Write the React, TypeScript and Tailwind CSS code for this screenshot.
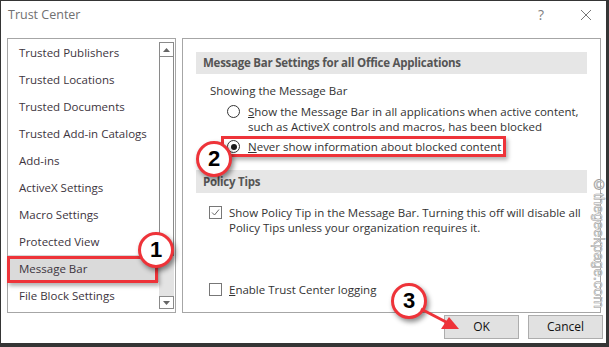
import React from 'react';

const navItems = [
	'Trusted Publishers',
	'Trusted Locations',
	'Trusted Documents',
	'Trusted Add-in Catalogs',
	'Add-ins',
	'ActiveX Settings',
	'Macro Settings',
	'Protected View',
	'Message Bar',
	'File Block Settings',
];

function Callout({ n, className }: { n: string; className: string }) {
	return (
		<div
			className={`absolute w-[36px] h-[36px] rounded-full border-[3px] border-[#ee3339] bg-white flex items-center justify-center shadow-[2px_3px_5px_rgba(0,0,0,0.45)] ${className}`}
		>
			<span className="text-[22px] font-bold text-black leading-none font-['Liberation_Sans',sans-serif]">{n}</span>
		</div>
	);
}

function Radio({ checked }: { checked?: boolean }) {
	return (
		<span className="w-[13px] h-[13px] rounded-full border border-[#333] bg-white flex items-center justify-center shrink-0 mt-[1px]">
			{checked && <span className="w-[6px] h-[6px] rounded-full bg-[#1a1a1a]" />}
		</span>
	);
}

function Checkbox({ checked }: { checked?: boolean }) {
	return (
		<span className="w-[13px] h-[13px] border border-[#777] bg-white flex items-center justify-center shrink-0 mt-[1px]">
			{checked && (
				<svg width="9" height="9" viewBox="0 0 9 9">
					<path d="M1 4.5 L3.5 7 L8 1.5" fill="none" stroke="#666" strokeWidth="1" />
				</svg>
			)}
		</span>
	);
}

export default function App() {
	return (
		<div className="relative w-[609px] h-[347px] overflow-hidden bg-[#353535] font-['Open_Sans',sans-serif] text-[11.5px] text-[#333]">
			<div className="ml-[1px] mt-[1px] w-[605px] h-[342px] bg-white flex flex-col">
				{/* title bar */}
				<div className="h-[37px] flex items-start pt-[5px] pl-[7px] pr-[14px]">
					<span className="text-[12.5px] leading-[18px] text-[#707070]">Trust Center</span>
					<span className="ml-auto mr-[36px] text-[14px] leading-[18px] text-[#808080]">?</span>
					<svg width="12" height="12" viewBox="0 0 12 12" className="mt-[3px]">
						<path d="M1 1 L11 11 M11 1 L1 11" stroke="#777" strokeWidth="1" />
					</svg>
				</div>

				{/* content */}
				<div className="flex gap-[6px] pl-[6px] h-[275px]">
					<div className="w-[169px] h-full border border-[#a6a6a6] flex overflow-hidden">
						<div className="flex-1 flex flex-col">
							{navItems.map((item) => (
								<div
									key={item}
									className={`h-[27px] shrink-0 flex items-center pl-[11px] whitespace-nowrap text-[#3d3540] ${item === 'Message Bar' ? 'bg-[#dadada]' : ''}`}
								>
									{item}
								</div>
							))}
						</div>
						<div className="w-[15px] mr-[1px] mt-[3px] mb-[3px] flex flex-col">
							<div className="h-[15px] border border-[#8a8a8a] flex items-center justify-center">
								<svg width="7" height="4" viewBox="0 0 7 4">
									<path d="M0 4 L3.5 0 L7 4 Z" fill="#666" />
								</svg>
							</div>
							<div className="flex-1 border-x border-b border-[#8a8a8a]" />
							<div className="h-[40px] bg-[#e3e3e3]" />
							<div className="h-[13px] border border-[#8a8a8a] flex items-center justify-center">
								<svg width="7" height="4" viewBox="0 0 7 4">
									<path d="M0 0 L3.5 4 L7 0 Z" fill="#666" />
								</svg>
							</div>
						</div>
					</div>

					<div className="w-[419px] h-full border border-[#a6a6a6] px-[13px] pt-[13px] flex flex-col whitespace-nowrap">
						<div className="h-[22px] bg-[#e6e6e6] flex items-center pl-[7px] font-bold text-[#555] tracking-[-0.25px]">
							Message Bar Settings for all Office Applications
						</div>
						<div className="mt-[9px] pl-[14px] leading-[16px]">Showing the Message Bar</div>
						<div className="mt-[5px] pl-[31px] flex gap-[8px] leading-[15px]">
							<Radio />
							<span>
								<span className="underline">S</span>how the Message Bar in all applications when active content,
								<br />
								such as ActiveX controls and macros, has been blocked
							</span>
						</div>
						<div className="mt-[5px] pl-[31px] flex gap-[8px] leading-[15px]">
							<Radio checked />
							<span>
								<span className="underline">N</span>ever show information about blocked content
							</span>
						</div>
						<div className="mt-[16px] h-[23px] bg-[#e6e6e6] flex items-center pl-[7px] font-bold text-[#555] tracking-[-0.25px]">
							Policy Tips
						</div>
						<div className="mt-[12px] pl-[13px] flex gap-[7px] leading-[15px]">
							<Checkbox checked />
							<span>
								Show Policy Tip in the Message Bar. Turning this off will disable all
								<br />
								Policy Tips unless your organization requires it.
							</span>
						</div>
						<div className="mt-[47px] pl-[13px] flex gap-[7px] leading-[15px]">
							<Checkbox />
							<span>
								<span className="underline">E</span>nable Trust Center logging
							</span>
						</div>
					</div>
				</div>

				{/* footer */}
				<div className="flex justify-end gap-[9px] pr-[3px] mt-[2px]">
					<button className="w-[75px] h-[24px] bg-[#e1e1e1] border border-[#adadad] text-[12px] text-[#111]">OK</button>
					<button className="w-[75px] h-[24px] bg-[#e1e1e1] border border-[#adadad] text-[12px] text-[#111]">Cancel</button>
				</div>
			</div>

			{/* annotations */}
			<div className="absolute left-[7px] top-[256px] w-[151px] h-[27px] border-[3px] border-[#ee3339] shadow-[2px_3px_4px_rgba(0,0,0,0.3)]" />
			<div className="absolute left-[221px] top-[136px] w-[285px] h-[21px] border-[3px] border-[#ee3339] shadow-[2px_3px_4px_rgba(0,0,0,0.3)]" />
			<Callout n="1" className="left-[138px] top-[232px]" />
			<Callout n="2" className="left-[196px] top-[141px]" />
			<Callout n="3" className="left-[391px] top-[283px]" />
			<svg className="absolute left-0 top-0" width="609" height="347" viewBox="0 0 609 347">
				<path d="M421 309 L448 323" stroke="#ee3339" strokeWidth="3" />
				<path d="M459 329 L441 329 L449 317 Z" fill="#ee3339" />
			</svg>
			<div className="absolute left-[592px] top-[177px] text-[14.5px] leading-[14px] text-[#f2f2f2] [-webkit-text-stroke:0.5px_#9a9a9a] [writing-mode:vertical-rl] font-['Liberation_Sans',sans-serif]">
				©thegeekpage.com
			</div>
		</div>
	);
}
